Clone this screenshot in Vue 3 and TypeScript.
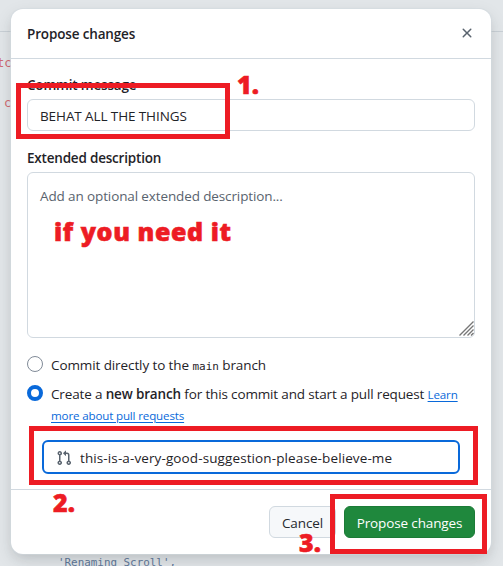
<script setup lang="ts">
import { ref } from 'vue'

const message = ref('BEHAT ALL THE THINGS')
const description = ref('')
const branch = ref('this-is-a-very-good-suggestion-please-believe-me')
const target = ref<'direct' | 'branch'>('branch')
</script>

<template>
  <main class="page">
    <div class="rule"></div>
    <code class="code code-a">tc</code>
    <code class="code code-b">c</code>
    <code class="code code-c">'Renaming Scroll',</code>

    <section class="dialog" role="dialog" aria-label="Propose changes">
      <header class="head">
        <h1 class="t-title">Propose changes</h1>
        <button class="close" aria-label="Close">
          <svg width="16" height="16" viewBox="0 0 16 16" fill="#59636e"><path d="M3.72 3.72a.75.75 0 0 1 1.06 0L8 6.94l3.22-3.22a.749.749 0 0 1 1.275.326.749.749 0 0 1-.215.734L9.06 8l3.22 3.22a.749.749 0 0 1-.326 1.275.749.749 0 0 1-.734-.215L8 9.06l-3.22 3.22a.751.751 0 0 1-1.042-.018.751.751 0 0 1-.018-1.042L6.94 8 3.72 4.78a.75.75 0 0 1 0-1.06Z" /></svg>
        </button>
      </header>

      <div class="body">
        <label class="label t-commit" for="message">Commit message</label>
        <input id="message" v-model="message" class="field" />
        <label class="label t-extended" for="description">Extended description</label>
        <div class="area-wrap">
          <textarea id="description" v-model="description" class="area" placeholder="Add an optional extended description..."></textarea>
          <svg class="grip" width="15" height="15" viewBox="0 0 15 15" fill="none" stroke="#777" stroke-width="1.4"><path d="M.5 14.5l14-14M4.5 14.5l10-10M8.5 14.5l6-6M12 14.5l2.5-2.5" /></svg>
        </div>

        <div class="option first" @click="target = 'direct'">
          <span class="radio" :class="{ on: target === 'direct' }"></span>
          <span class="t-direct">Commit directly to the <code>main</code> branch</span>
        </div>
        <div class="option" @click="target = 'branch'">
          <span class="radio" :class="{ on: target === 'branch' }"></span>
          <div class="copy">
            <div class="t-create">Create a <b>new branch</b> for this commit and start a pull request <a class="link">Learn</a></div>
            <div class="more"><a class="link">more about pull requests</a></div>
          </div>
        </div>

        <div class="branch">
          <svg width="16" height="16" viewBox="0 0 16 16" fill="#59636e"><path d="M1.5 3.25a2.25 2.25 0 1 1 3 2.122v5.256a2.251 2.251 0 1 1-1.5 0V5.372A2.25 2.25 0 0 1 1.5 3.25Zm5.677-.177L9.573.677A.25.25 0 0 1 10 .854V2.5h1A2.5 2.5 0 0 1 13.5 5v5.628a2.251 2.251 0 1 1-1.5 0V5a1 1 0 0 0-1-1h-1v1.646a.25.25 0 0 1-.427.177L7.177 3.427a.25.25 0 0 1 0-.354ZM3.75 2.5a.75.75 0 1 0 0 1.5.75.75 0 0 0 0-1.5Zm0 9.5a.75.75 0 1 0 0 1.5.75.75 0 0 0 0-1.5Zm8.25.75a.75.75 0 1 0 1.5 0 .75.75 0 0 0-1.5 0Z" /></svg>
          <input v-model="branch" aria-label="Branch name" />
        </div>
      </div>

      <footer class="foot">
        <button class="btn cancel">Cancel</button>
        <button class="btn primary">Propose changes</button>
      </footer>
    </section>

    <div class="mark mark-1"></div>
    <div class="mark mark-2"></div>
    <div class="mark mark-3"></div>
    <span class="note note-1">1.</span>
    <span class="note note-if">if you need it</span>
    <span class="note note-2">2.</span>
    <span class="note note-3">3.</span>
  </main>
</template>

<style>
body { background: #e2e6e9; overflow: hidden; }
</style>

<style scoped>
* { box-sizing: border-box; }
.page { position: relative; width: 503px; height: 566px; overflow: hidden; padding: 9px 12px 12px 11px; background: #e2e6e9; color: #1f2328; font: 13.5px/20px "Open Sans", "Noto Sans", sans-serif; }
.rule { position: absolute; left: 0; right: 0; top: 31px; height: 1px; background: #c9d0d6; }
.code { position: absolute; font: 12px/16px "DejaVu Sans Mono", monospace; color: #d06b72; white-space: pre; }
.code-a { left: -3px; top: 55px; }
.code-b { left: 4px; top: 95px; }
.code-c { left: 58px; top: 555px; color: #5f7899; font-size: 10.9px; }
.dialog { position: relative; width: 480px; height: 545px; border-radius: 12px; background: #fff; box-shadow: 0 0 0 1px #d1d9e080, 0 6px 12px -3px #25292e20, 0 6px 18px #25292e1c; display: flex; flex-direction: column; }
.head { height: 50px; flex: none; border-bottom: 1px solid #d1d9e0; display: flex; justify-content: space-between; align-items: center; padding: 0 16px; }
h1 { margin: 0; font-size: 13.5px; line-height: 20px; font-weight: 600; letter-spacing: -.15px; }
.close { border: 0; background: none; padding: 0; width: 16px; height: 16px; display: flex; margin-bottom: 2px; }
.body { flex: 1; padding: 16px 16px 0; border-bottom: 1px solid #d1d9e0; }
.label { display: block; height: 24px; line-height: 21px; font-weight: 600; letter-spacing: -.2px; }
.field { display: block; width: 448px; height: 32px; border: 1px solid #d1d9e0; border-radius: 6px; padding: 1px 12px 0; outline: 0; font: inherit; letter-spacing: -.1px; color: inherit; background: #fff; }
.t-extended { margin-top: 17px; }
.area-wrap { position: relative; height: 166px; }
.area { display: block; width: 448px; height: 166px; resize: none; border: 1px solid #d1d9e0; border-radius: 6px; padding: 13px 12px; font: inherit; letter-spacing: -.12px; color: inherit; outline: 0; }
.area::placeholder { color: #59636e; opacity: 1; }
.grip { position: absolute; right: 1px; bottom: 2px; }
.option { display: flex; gap: 8px; }
.first { margin-top: 18px; height: 29px; }
.radio { flex: none; width: 16px; height: 16px; border: 1px solid #818b98; border-radius: 50%; background: #fff; }
.radio.on { border: 4px solid #0969da; }
.option code { font: 11px "DejaVu Sans Mono", monospace; letter-spacing: 0; }
.option b { font-weight: 600; }
.option span, .copy { white-space: nowrap; }
.t-direct, .t-create { letter-spacing: -.1px; margin-top: -1px; }
.t-create { letter-spacing: -.15px; }
.link { color: #0969da; text-decoration: underline; font-size: 11.6px; letter-spacing: -.16px; text-underline-offset: 2px; }
.branch { margin: 14px 0 0 15px; width: 418px; height: 34px; border: 2px solid #0969da; border-radius: 6px; display: flex; align-items: center; padding-left: 12px; gap: 8px; }
.branch svg { position: relative; top: 1px; }
.branch input { flex: 1; min-width: 0; border: 0; padding: 1px 0 0; outline: 0; background: none; font: inherit; letter-spacing: .11px; color: inherit; }
.foot { height: 64px; flex: none; display: flex; justify-content: flex-end; padding: 16px; gap: 8px; }
.btn { height: 32px; padding: 1px 0 0; border-radius: 6px; font: inherit; letter-spacing: -.12px; text-align: center; white-space: nowrap; }
.cancel { width: 67px; color: #25292e; background: #f6f8fa; border: 1px solid #d1d9e0; }
.primary { width: 131px; color: #fff; background: #1f883d; border: 1px solid #1c7b37; }
.mark { position: absolute; border: 5px solid #ed1c24; pointer-events: none; }
.mark-1 { left: 16px; top: 83px; width: 214px; height: 56px; }
.mark-2 { left: 29px; top: 426px; width: 449px; height: 59px; }
.mark-3 { left: 330px; top: 494px; width: 157px; height: 60px; }
.note { position: absolute; font: 800 25px/30px "Open Sans", sans-serif; color: #ed1c24; -webkit-text-stroke: .6px #ed1c24; white-space: nowrap; }
.note-1 { left: 237px; top: 69px; }
.note-if { left: 54px; top: 216px; letter-spacing: .6px; }
.note-2 { left: 53px; top: 487px; }
.note-3 { left: 299px; top: 527px; }
</style>
